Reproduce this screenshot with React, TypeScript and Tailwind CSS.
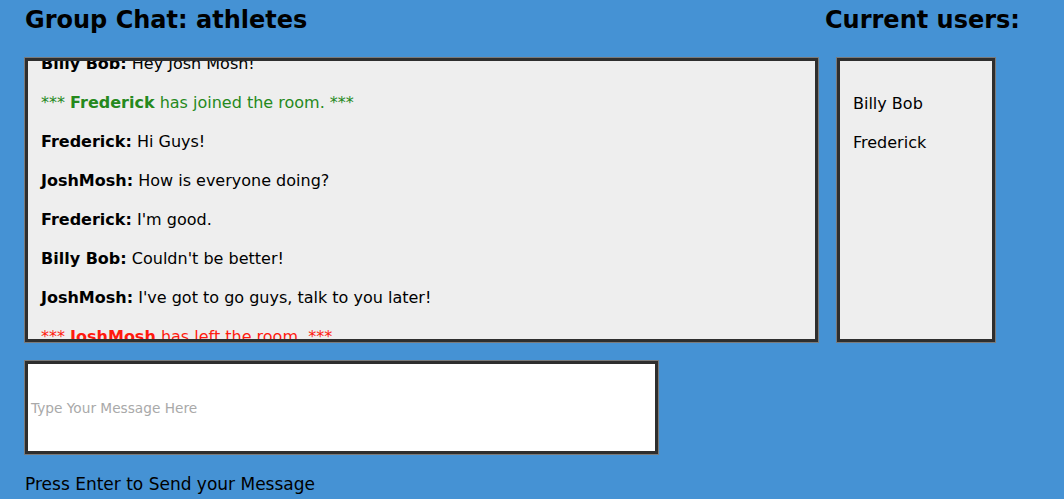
import { useState } from "react";

type Msg = { user?: string; text: string; kind: "chat" | "join" | "leave" };

const messages: Msg[] = [
  { user: "Billy Bob", text: "Hey Josh Mosh!", kind: "chat" },
  { user: "Frederick", text: "has joined the room.", kind: "join" },
  { user: "Frederick", text: "Hi Guys!", kind: "chat" },
  { user: "JoshMosh", text: "How is everyone doing?", kind: "chat" },
  { user: "Frederick", text: "I'm good.", kind: "chat" },
  { user: "Billy Bob", text: "Couldn't be better!", kind: "chat" },
  { user: "JoshMosh", text: "I've got to go guys, talk to you later!", kind: "chat" },
  { user: "JoshMosh", text: "has left the room.", kind: "leave" },
];

const users = ["Billy Bob", "Frederick"];

const App = () => {
  const [message, setMessage] = useState<string>("");

  return (
    <main className="min-h-[499px] w-full bg-[#4592d4] font-['DejaVu_Sans',sans-serif] text-black">
      <div className="flex gap-[19px] pl-[25px] pt-[5px]">
        {/* Chat column */}
        <div className="flex w-[793px] flex-col">
          <h1 className="text-[24px] font-bold leading-[30px]">Group Chat: athletes</h1>
          <div className="mt-[23px] h-[284px] overflow-hidden border-[3px] border-[#2e2e2e] bg-[#eeeeee] shadow-[0_0_0_1px_#7a7a7a]">
            {/* scrolled a little, so the first line is cut at the top */}
            <div className="-mt-[9px] px-[13px] text-[16px] leading-[23px]">
              {messages.map((m, i) => {
                if (m.kind === "join") {
                  return (
                    <p key={i} className="mb-4 text-[#25891c]">
                      *** <b>{m.user}</b> {m.text} ***
                    </p>
                  );
                }
                if (m.kind === "leave") {
                  return (
                    <p key={i} className="mb-4 text-[#ff1a0f]">
                      *** <b>{m.user}</b> {m.text} ***
                    </p>
                  );
                }
                return (
                  <p key={i} className="mb-4">
                    <b>{m.user}:</b> {m.text}
                  </p>
                );
              })}
            </div>
          </div>
          <textarea
            value={message}
            onChange={(e) => setMessage(e.target.value)}
            placeholder="Type Your Message Here"
            className="mt-[19px] h-[93px] w-[633px] resize-none border-[3px] border-[#2e2e2e] bg-white px-[3px] pt-[35px] text-[13.7px] leading-[18px] shadow-[0_0_0_1px_#7a7a7a] outline-none placeholder:text-[#a9a9a9]"
          />
          <p className="mt-[19px] text-[17px] leading-[22px]">Press Enter to Send your Message</p>
        </div>

        {/* Users column */}
        <div className="flex flex-col">
          <h2 className="-ml-[12px] text-[24px] font-bold leading-[30px]">Current users:</h2>
          <div className="mt-[23px] h-[284px] w-[158px] border-[3px] border-[#2e2e2e] bg-[#eeeeee] pt-[31px] pl-[13px] text-[16px] leading-[23px] shadow-[0_0_0_1px_#7a7a7a]">
            {users.map((u) => (
              <p key={u} className="mb-4">{u}</p>
            ))}
          </div>
        </div>
      </div>
    </main>
  );
};

export default App;
